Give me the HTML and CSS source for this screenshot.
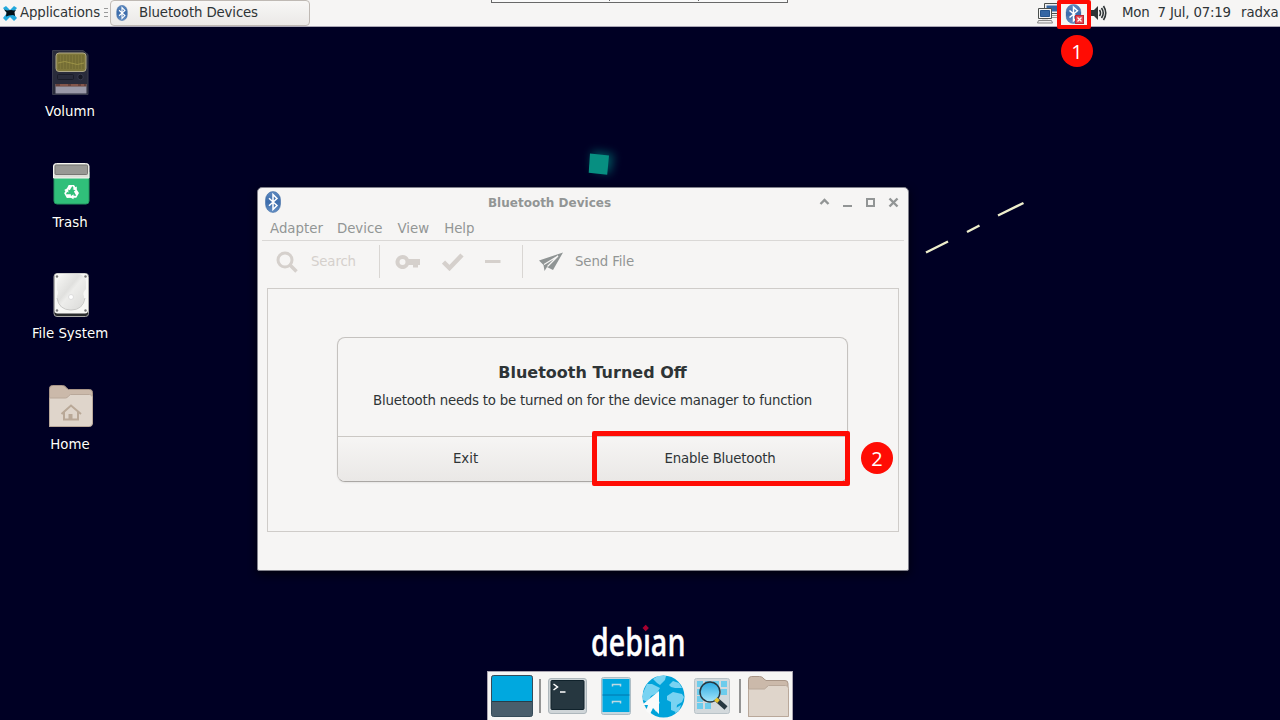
FILE: index.html
```html
<!DOCTYPE html>
<html lang="en">
<head>
<meta charset="utf-8">
<title>Desktop</title>
<link rel="stylesheet" href="styles.css">
</head>
<body>
<svg class="defs" width="0" height="0">
  <defs>
    <linearGradient id="btg" x1="0" y1="0" x2="0" y2="1"><stop offset="0" stop-color="#5e8ac0"/><stop offset=".5" stop-color="#3c6cab"/><stop offset="1" stop-color="#6690c4"/></linearGradient>
    <linearGradient id="glass" x1="0" y1="0" x2="0" y2="1"><stop offset="0" stop-color="#2aa9e0"/><stop offset="1" stop-color="#a5e6fb"/></linearGradient>
    <linearGradient id="disk" x1="0" y1="0" x2="1" y2="1"><stop offset="0" stop-color="#f8f8f6"/><stop offset=".4" stop-color="#e0e0de"/><stop offset=".5" stop-color="#ededeb"/><stop offset="1" stop-color="#d8d8d6"/></linearGradient>
    <symbol id="bluetooth" viewBox="0 0 16 22"><rect x=".5" y=".5" width="15" height="21" rx="7.500" ry="8.500" fill="url(#btg)" stroke="#34649f" stroke-opacity=".5"/><path d="M4 7.200l8 7.300-4 4V3.500l4 4-8 7.300" fill="none" stroke="#fff" stroke-width="1.500"/></symbol>
  </defs>
</svg>
<div class="desktop">
  <header class="panel">
    <div class="apps">
      <svg width="16" height="16" viewBox="0 0 16 16"><path d="M1 3L4 1l4 4 4-4 3 2-4 5 4 5-3 3-4-4-4 4-3-3 4-5z" fill="#22a8dc"/><path d="M2 4.500l3 1 4-.5 3 .5 2-.5-1.500 2 .5 4-2-1-4 .5-3 1 .5-4z" fill="#031016"/></svg>
      <span>Applications</span>
      <i class="handle"></i>
    </div>
    <div class="task"><svg width="12" height="16" viewBox="0 0 16 22"><use href="#bluetooth"/></svg><span>Bluetooth Devices</span></div>
    <div class="tray">
      <svg class="net" width="22" height="22" viewBox="0 0 22 22"><g stroke="#4b4f4d"><path d="M8.500 1.500h15v10h-15z" fill="#eee"/><path d="M10.500 3.500H22v6H10.500z" fill="#3466a4" stroke="none"/><path d="M15 13.500h7v2h-7z" fill="#eee" stroke="#999"/><path d="M2.500 6.500h13v10h-13z" fill="#f5f5f5"/><path d="M4.500 8.500h9v6h-9z" fill="#3466a4" stroke="#24558f"/><path d="M6 17h6v2H6z" fill="#ddd" stroke="none"/><path d="M2.500 18.500h13l1 2.500h-15z" fill="#eee" stroke="#888"/></g></svg>
      <div class="mark-tray"><svg width="26" height="21" viewBox="0 0 26 21"><svg x="4.500" y="0" width="16" height="20" viewBox="0 0 16 22" preserveAspectRatio="none"><use href="#bluetooth"/></svg><rect x="14.500" y="11.500" width="8" height="8" fill="#e34953" stroke="#c22632"/><path d="M16.500 13.500l4 4m0-4l-4 4" stroke="#fff" stroke-width="1.200"/></svg></div>
      <svg class="vol" width="16" height="16" viewBox="0 0 16 16"><path d="M0 5h3l4-4v14l-4-4H0z" fill="#2e3436"/><path d="M8.500 5q2 3 0 6M10.500 3q3.500 5 0 10M12.500 1q4.500 7 0 14" fill="none" stroke="#2e3436" stroke-width="1.600"/></svg>
      <span class="clock">Mon&nbsp; 7 Jul, 07:19</span>
      <span class="user">radxa</span>
    </div>
    <div class="tab-box"><i></i><i></i><i></i></div>
  </header>

  <nav class="shortcuts">
    <div class="shortcut">
      <svg width="48" height="48" viewBox="0 0 48 48"><path d="M6.500 2.500H37l5 4v40H6.500z" fill="#292b3b" stroke="#3a3c4d"/><rect x="10" y="5" width="30" height="18.500" rx="3" fill="#80783b" stroke="#b0a989"/><path d="M13 7v14M16 7v14M19 7v14M22 7v14M25 7v14M28 7v14M31 7v14M34 7v14M37 7v14" stroke="#6b6430"/><path d="M12 15q7-3 13 0t13 0" fill="none" stroke="#9c9347"/><rect x="11.500" y="26.500" width="16" height="5" rx="1" fill="none" stroke="#1a1c29"/><circle cx="34.500" cy="29" r="2.800" fill="#171925" stroke="#383a4d"/><path d="M9.500 36h31v9.500h-31z" fill="#9a99a8"/><path d="M9.500 36h31v2.500h-31z" fill="#68423b"/><path d="M14 37h8m3 0h7m3 0h3" stroke="#a06b5c"/></svg>
      <span>Volumn</span>
    </div>
    <div class="shortcut">
      <svg width="48" height="48" viewBox="0 0 48 48"><path d="M8 13h35v29q0 3-3 3H11q-3 0-3-3z" fill="#30bf7a" stroke="#249660"/><path d="M7.500 7q0-2.500 3-2.500h29q3.500 0 3.500 2.500v12H7.500z" fill="#dedfd9" stroke="#f5f4ef"/><rect x="9" y="6" width="32.500" height="9.500" rx="1" fill="#989894" stroke="#777773"/><g transform="translate(25.500 33)" fill="#fff"><path id="arrow" d="M-4.800-3.200L-2.800-7H2.500L4-4.700l1.300-.7v4.700L1-3l1.300-.7-1.500-2.300L-1.700-1.800z"/><use href="#arrow" transform="rotate(120)"/><use href="#arrow" transform="rotate(240)"/></g></svg>
      <span>Trash</span>
    </div>
    <div class="shortcut">
      <svg width="48" height="48" viewBox="0 0 48 48"><rect x="8" y="3.500" width="34.500" height="43" rx="3" fill="#292b2c" stroke="#a8a8a6"/><rect x="8.500" y="3.500" width="33.500" height="40" rx="3" fill="#f7f7f5"/><path d="M11 12q2-8 10-8h10q8 0 9 8v7q-4 4-2 7 1 13-13 14-14-1-14-14 2-4 0-6z" fill="url(#disk)"/><path d="M11 28q2 12 14 12t14-12" fill="none" stroke="#c9c9c7"/><circle cx="25" cy="27" r="2.500" fill="#fff" stroke="#ddd"/><g fill="#777"><circle cx="11" cy="6.500" r="1.200"/><circle cx="39.500" cy="6.500" r="1.200"/><circle cx="11" cy="40.500" r="1.200"/><circle cx="39.500" cy="40.500" r="1.200"/></g></svg>
      <span>File System</span>
    </div>
    <div class="shortcut">
      <svg width="48" height="48" viewBox="0 0 48 48"><path d="M3.500 45.500v-38q0-3 3-3h10q3 0 4 2.500l2 1.500h21q3 0 3 3v31z" fill="#cbb9aa" stroke="#a89587"/><path d="M3.500 45.500V17h16q2 0 3-2l2-1.500h19q3 0 3 3V42q0 3.500-3 3.500z" fill="#dfd5cb" stroke="#b9a89a"/><path d="M15.500 33L25 24.500l10 8.500M18 31v7.500h14V31" fill="none" stroke="#b9a897" stroke-width="2"/><path d="M22.500 33h4v5h-4z" fill="#b9a897"/></svg>
      <span>Home</span>
    </div>
  </nav>

  <svg class="wallpaper" width="1280" height="720" viewBox="0 0 1280 720">
    <path class="glow" d="M592 151l22 3-4 20-18-5z" fill="#007d7a" opacity=".65"/>
    <path d="M590 153.500l19 2-1.800 19.200-18.500-2z" fill="#078f81"/>
    <path d="M926 252.500l22-11M967 232l12.500-6.500M998 215.500l25.500-12.500" stroke="#eeeecc" stroke-width="2.400"/>
    <text class="brand" x="591" y="655.500" textLength="94.500" lengthAdjust="spacingAndGlyphs">debian</text>
    <path d="M641 622h9v11.500h-9z" fill="#000024"/>
    <path d="M645.700 624.700l3.200 3.300-3.200 3.300-3.200-3.300z" fill="#a80030"/>
  </svg>

  <section class="window">
    <div class="titlebar">
      <svg width="16" height="22"><use href="#bluetooth"/></svg>
      <h1>Bluetooth Devices</h1>
      <svg class="controls" width="82" height="12" viewBox="0 0 82 12" fill="none" stroke="#929595" stroke-width="2"><path d="M1.500 8L5.500 4l4 4" stroke-width="2.400"/><path d="M24 10h9"/><path d="M48 3h7v7h-7z"/><path d="M70.500 2.500l8 8m0-8l-8 8" stroke-width="2.400"/></svg>
    </div>
    <div class="menubar"><span>Adapter</span><span>Device</span><span>View</span><span>Help</span></div>
    <div class="toolbar">
      <div class="tool search"><svg width="22" height="22" viewBox="0 0 22 22" fill="none" stroke="#d5d0cc"><circle cx="9" cy="9" r="7" stroke-width="3"/><path d="M14 14l6.500 6.500" stroke-width="3.500"/></svg><span>Search</span></div>
      <div class="tool symbols">
        <svg width="26" height="16" viewBox="0 0 26 16"><path fill-rule="evenodd" fill="#d5d0cc" d="M7.500 1a7 7 0 016.300 4H25v6h-2v2.500h-5V11h-4.200A7 7 0 117.500 1zm0 4a3 3 0 100 6 3 3 0 000-6z"/></svg>
        <svg width="22" height="18" viewBox="0 0 22 18"><path d="M1.500 9l6 6L20 2" fill="none" stroke="#d5d0cc" stroke-width="4.500"/></svg>
        <svg width="16" height="4"><path d="M0 0h15.500v3H0z" fill="#d5d0cc"/></svg>
      </div>
      <div class="tool send"><svg width="25" height="20" viewBox="0 0 25 20"><path fill="#8f9494" d="M0 8.500L24 .5 14 18l-6-3-2.500 4-1-6z"/><path d="M5 12.500L19 4 8.500 14.500" fill="none" stroke="#f6f5f4" stroke-width="1.300"/></svg><span>Send File</span></div>
    </div>
    <div class="content">
      <div class="notice">
        <div class="message"><h2>Bluetooth Turned Off</h2><p>Bluetooth needs to be turned on for the device manager to function</p></div>
        <div class="actions"><button>Exit</button><button class="enable">Enable Bluetooth</button></div>
        <div class="mark-enable"></div>
      </div>
    </div>
  </section>
  <div class="badge one">1</div>
  <div class="badge two">2</div>

  <footer class="dock">
    <svg width="42" height="42" viewBox="0 0 42 42"><rect x=".5" y=".5" width="41" height="41" rx="2" fill="#495d6b" stroke="#354b59"/><path d="M1 3q0-2 2-2h36q2 0 2 2v23H1z" fill="#00a8df"/><path d="M1 26.500h40" stroke="#263d4a"/></svg>
    <i></i>
    <svg class="terminal" width="39" height="36" viewBox="0 0 39 36"><rect x=".5" y=".5" width="38" height="35" rx="2.500" fill="#cfd5d8" stroke="#aeb7bc"/><rect x="3" y="2.500" width="33" height="29" rx="1" fill="#263740" stroke="#10222b"/><path d="M5.500 6l4 3-4 3M12 14h5.500" fill="none" stroke="#fff" stroke-width="1.500"/></svg>
    <svg class="cabinet" width="30" height="38" viewBox="0 0 30 38"><rect x=".5" y=".5" width="29" height="37" rx="2" fill="#c6d7df" stroke="#aebdc5"/><path d="M1.500 2h27v33h-27z" fill="#00a7df"/><path d="M1.500 18h27" stroke="#0077ad"/><path d="M11.500 9.500v-2h8v2M11.500 26.500v-2h8v2" fill="none" stroke="#bed9e2" stroke-width="1.500"/></svg>
    <svg class="globe" width="43" height="43" viewBox="0 0 43 43"><circle cx="21.500" cy="21.500" r="21" fill="#00a3da"/><g fill="#79d3f2"><path d="M11 4l5-3 8 0-1 4-5 5-3-2zM5 9l5 0 8 4-3 5-6 3-3 6-5-2v-7zM27 10l4-4 6 2 3 5-7 0-4-1zM25 21l6-4 9 2 2 3-2 5-5 3-1 7-5-2 0-8-4-2zM12 24l6 3-2 5-2 5-4-7zM34 33l5-3-2 6-4 2z"/></g><path d="M17 16v23l-6-6-3 6-4-3 2-6H0z" fill="#fafafa"/></svg>
    <svg class="finder" width="36" height="36" viewBox="0 0 36 36"><rect x=".5" y=".5" width="35" height="35" rx="2" fill="#d3d9dc" stroke="#b9c3c8"/><path d="M3 3h6v6H3zm8 0h6v6h-6zm8 0h6v6h-6zm8 0h6v6h-6zM3 11h6v6H3zm24 0h6v6h-6zM3 18h6v6H3zm8 7h6v6h-6zm-8 0h6v6H3z" fill="#6dccec"/><circle cx="16" cy="14" r="10" fill="url(#glass)" stroke="#263740" stroke-width="1.500"/><path d="M23 22l9 8" stroke="#263740" stroke-width="4.500"/><path d="M21.500 21l3 2.500" stroke="#e7c52f" stroke-width="4"/></svg>
    <i></i>
    <svg width="41" height="41" viewBox="0 0 41 41"><path d="M.5 40.500v-37q0-3 3-3h8q3 0 4.500 2.500l2 1.500h19q3 0 3 3v33z" fill="#cbb9aa" stroke="#a89587"/><path d="M.5 40.500V13h16l4-3.500h17q3 0 3 3v28z" fill="#dfd5cb" stroke="#b9a89a"/></svg>
  </footer>
</div>
</body>
</html>
```

FILE: styles.css
```css
* { box-sizing: border-box; }
body { margin: 0; overflow: hidden; font: 13.33px/16px "DejaVu Sans", sans-serif; color: #2e3436; }
svg { display: block; flex: none; }
.defs, .wallpaper { position: absolute; left: 0; top: 0; }
.desktop { position: relative; width: 1280px; height: 720px; background: #000024; overflow: hidden; }
.panel { position: relative; display: flex; height: 27px; background: #f6f5f4; border-bottom: 1px solid #aaa7b5; }
.apps { display: flex; align-items: center; width: 110px; height: 25px; padding-left: 2px; gap: 2px; letter-spacing: -.12px; }
.handle { width: 4px; height: 9px; margin-left: 2px; border-top: 1px solid #999; border-bottom: 1px solid #999; background: linear-gradient(#999, #999) 0 3px / 4px 1px no-repeat; }
.task { display: flex; align-items: center; gap: 11px; width: 200px; height: 26px; padding: 0 5px 1px; border: 1px solid #bfb9b4; border-radius: 4px; background: linear-gradient(#f8f7f6, #ebe9e7); letter-spacing: -.15px; }
.tray { display: flex; align-items: center; height: 26px; margin-left: auto; white-space: nowrap; }
.mark-tray { z-index: 2; width: 34px; height: 29px; margin: 2px 0 0 -1px; border: 4px solid #ff0c04; border-radius: 2px; background: #f6f5f4; }
.net { margin-top: -1px; }
.vol { margin: 0 15px 0 0; }
.clock { width: 119px; letter-spacing: -.2px; }
.user { width: 39px; letter-spacing: -.1px; }
.tab-box { position: absolute; left: 491px; top: 0; display: flex; width: 297px; height: 3px; border: 1px solid #686868; border-top: 0; background: #f9f9f9; }
.tab-box i { height: 1px; border-right: 1px solid #686868; }
.tab-box i:nth-child(1) { width: 118px; }
.tab-box i:nth-child(2) { width: 89px; }
.tab-box i:nth-child(3) { border: 0; }
.shortcuts { display: flex; flex-direction: column; width: 140px; padding-top: 21px; }
.shortcut { display: flex; flex-direction: column; align-items: center; height: 111px; gap: 8px; color: #fff; text-shadow: 0 1px 1px #000; }
.brand { font: 600 38px "Open Sans", sans-serif; fill: #fff; stroke: #fff; stroke-width: .3px; }
.glow { filter: blur(5px); }
.window { position: absolute; left: 257px; top: 187px; width: 652px; height: 384px; border: 1px solid #81818c; border-radius: 5px 5px 2px 2px; background: #f6f5f4; color: #929595; box-shadow: 0 3px 8px #00000c; }
.titlebar { display: grid; grid-template-columns: 16px 1fr 82px; align-items: center; height: 28px; padding: 0 7px; }
.titlebar h1 { margin: 2px 0 0; font-size: 12px; text-align: center; padding-left: 72px; padding-right: 73px; }
.controls { margin-top: 0; }
.menubar { display: flex; gap: 15px; height: 25px; margin: 0 4px; padding: 5px 8px 3px; border-bottom: 1px solid #dad8d6; }
.menubar span:nth-child(2) { margin-left: -1px; }
.toolbar { display: flex; height: 42px; padding: 4px 0 5px 18px; }
.tool { display: flex; align-items: center; }
.search { width: 104px; gap: 13px; border-right: 1px solid #d9d6d3; color: #d5d0cc; letter-spacing: -.15px; }
.symbols { width: 143px; gap: 21px; padding-left: 15px; border-right: 1px solid #d9d6d3; }
.send { padding-left: 16px; gap: 11px; letter-spacing: -.12px; }
.content { width: 632px; height: 244px; margin: 5px 0 0 9px; padding: 48px 0 0 69px; border: 1px solid #cfccc9; }
.notice { position: relative; width: 511px; height: 145px; border: 1px solid #c5c2bf; border-bottom-color: #aaa7a4; border-radius: 8px; color: #2e3436; box-shadow: 0 1px 2px #0001; }
.message { height: 98px; text-align: center; padding-top: 25px; }
.message h2 { margin: 0; font-size: 16px; line-height: 20px; }
.message p { margin: 10px 0 0; white-space: nowrap; letter-spacing: -.228px; }
.actions { display: grid; grid-template-columns: 255px 1fr; height: 45px; border-top: 1px solid #cbc8c4; border-radius: 0 0 7px 7px; overflow: hidden; }
.actions button { padding: 0; border: 0; background: linear-gradient(#f6f5f4, #eae8e6); color: inherit; font: inherit; }
.actions .enable { letter-spacing: -.22px; }
.mark-enable { position: absolute; left: 254px; top: 93px; width: 258px; height: 55px; border: 5px solid #ff0c04; border-radius: 2px; }
.badge { position: absolute; display: grid; place-items: center; width: 32px; height: 32px; border-radius: 50%; background: #ff0c04; color: #fff; font: 20px/32px "Open Sans", sans-serif; }
.one { left: 1061px; top: 35px; }
.two { left: 861px; top: 442px; }
.badge { padding-top: 1px; }
.dock { position: absolute; left: 487px; top: 671px; display: flex; align-items: center; width: 306px; height: 50px; padding-left: 3px; border: 1px solid #aaa5b1; background: #f6f5f4; }
.dock i { width: 2px; height: 34px; margin: 0 7px 0 6px; background: #949494; }
.dock .cabinet { margin-left: 14px; }
.dock .globe { margin-left: 11px; }
.dock .finder { margin-left: 9px; }
.dock .finder + i { margin-left: 9px; }
```
